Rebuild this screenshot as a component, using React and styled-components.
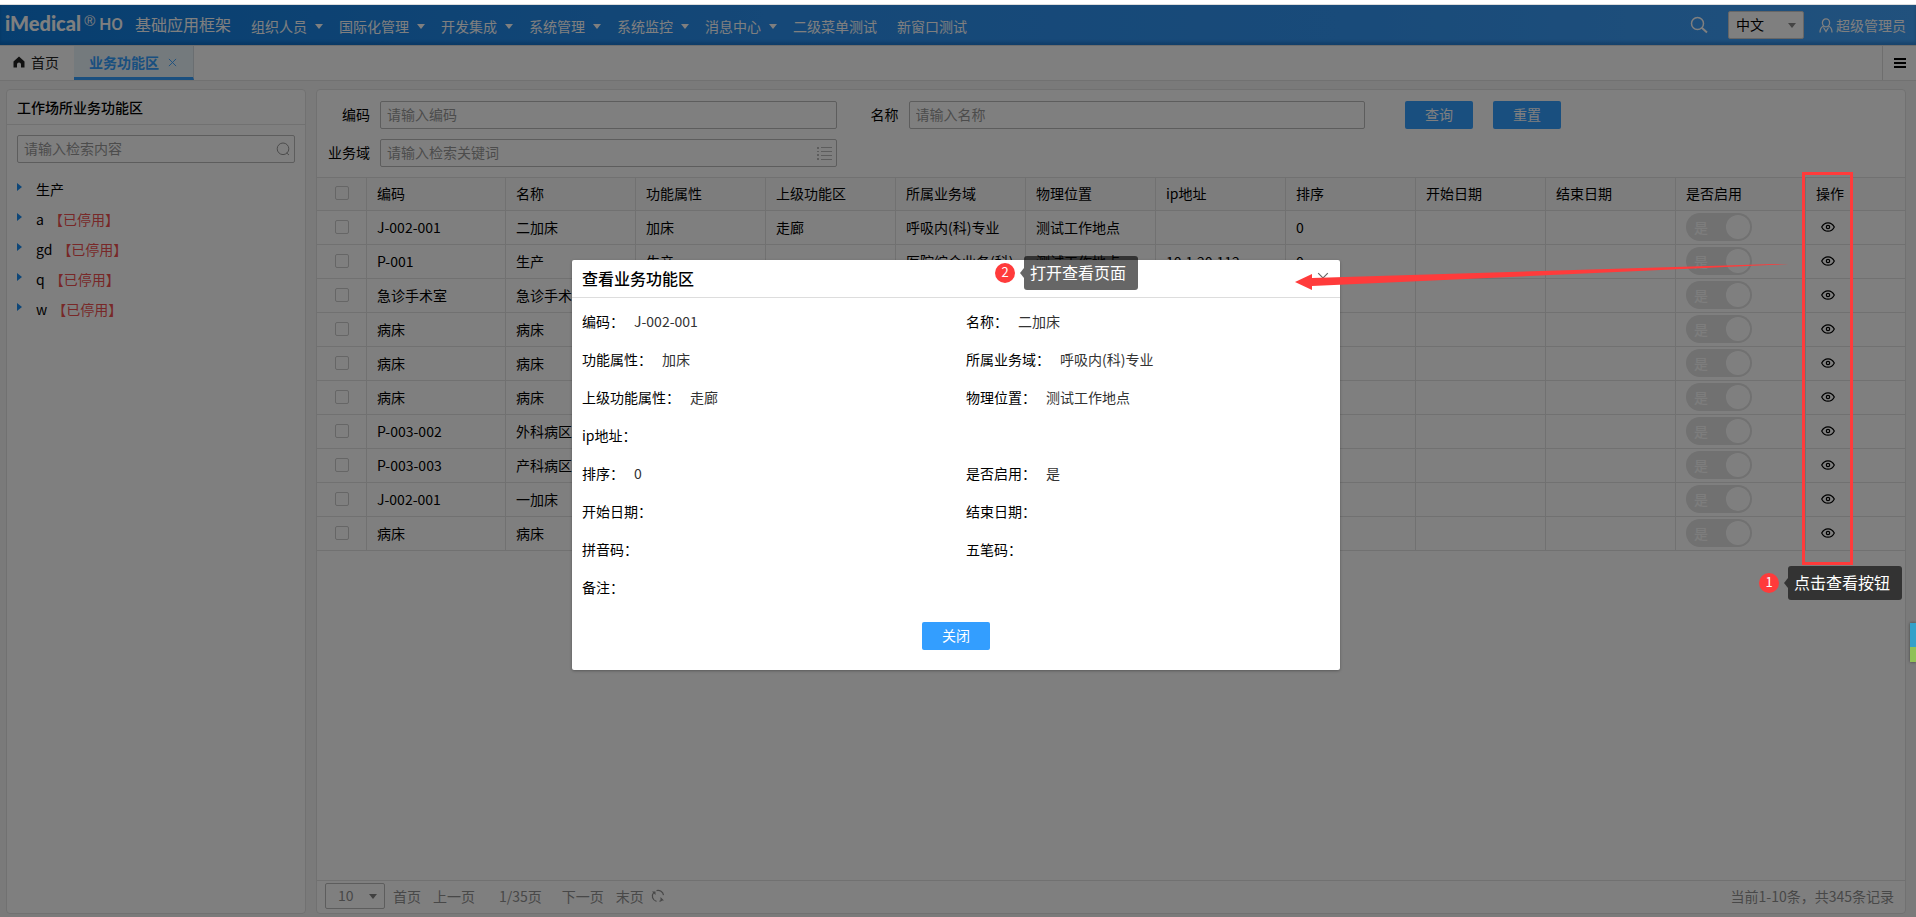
import React from "react";
import styled, { createGlobalStyle } from "styled-components";

const GlobalStyle = createGlobalStyle`
  *, *::before, *::after { box-sizing: border-box; }
  body {
    margin: 0;
    background: #fff;
    color: #000;
    font: 14px/20px "Noto Sans CJK SC", sans-serif;
  }
  button, input, select { font: inherit; color: inherit; }
  button { border: 0; padding: 0; background: none; cursor: pointer; }
  a { color: inherit; text-decoration: none; }
`;

const Page = styled.div`
  position: relative;
  display: flex;
  flex-direction: column;
  min-height: 100vh;
  border-top: 4px solid #fff;
`;

const Shell = styled.div`
  flex: 1;
  display: flex;
  flex-direction: column;
  border-top: 1px solid #ddd;
  background: #f5f5f5;
`;

/* ---------- header ---------- */

const Header = styled.header`
  display: flex;
  align-items: center;
  height: 40px;
  padding: 0 10px 0 5px;
  color: #fff;
  background: linear-gradient(90deg, #0f7ddf 0%, #2a90f0 40%, #3296f4 70%, #42a2fa 100%);
  box-shadow: inset 0 -3px 3px rgba(0, 60, 120, 0.25);
`;

const Logo = styled.span`
  font: 900 20px/32px Lato, sans-serif;
  height: 36px;
`;

const Registered = styled.span`
  height: 28px;
  margin: 0 4px 0 3px;
  font: 15px/20px "Liberation Sans", sans-serif;
`;

const Edition = styled.span`
  height: 32px;
  font: 500 17px/30px Roboto, sans-serif;
`;

const Product = styled.h1`
  margin: 0 20px 0 12px;
  padding-bottom: 2px;
  font-size: 16px;
  font-weight: 400;
  line-height: 20px;
`;

const Nav = styled.nav`
  display: flex;
  gap: 16px;
  padding-top: 2px;
`;

const NavItem = styled.button`
  display: flex;
  align-items: center;
  gap: 8px;
  padding-right: ${(p) => (p.$plain ? "4px" : "0")};
  white-space: nowrap;
`;

const Caret = styled.i`
  display: block;
  border: 4px solid transparent;
  border-top: 5px solid ${(p) => p.$color || "#fff"};
  border-bottom: 0;
  pointer-events: none;
`;

const HeaderTools = styled.div`
  display: flex;
  align-items: center;
  margin-left: auto;
`;

const IconButton = styled.button`
  display: flex;
  align-items: center;
  justify-content: center;
`;

const SelectBox = styled.div`
  display: flex;
  align-items: center;
  justify-content: flex-end;
  position: relative;
  margin: ${(p) => p.$margin || "0"};
  width: ${(p) => p.$width};
  height: ${(p) => p.$height};
  border: 1px solid ${(p) => p.$border};
  border-radius: 2px;
  background: #fff;
  padding-right: 7px;
`;

const Select = styled.select`
  position: absolute;
  inset: 0;
  width: 100%;
  padding: 0 0 2px ${(p) => p.$indent};
  border: 0;
  background: none;
  color: ${(p) => p.$color || "#000"};
  appearance: none;
`;

const User = styled.button`
  display: flex;
  align-items: center;
  gap: 3px;
`;

/* ---------- tab bar ---------- */

const TabBar = styled.div`
  display: flex;
  align-items: stretch;
  height: 36px;
  background: #fff;
  border-top: 1px solid #ddd;
  border-bottom: 1px solid #e2e2e2;
`;

const HomeTab = styled.button`
  display: flex;
  align-items: center;
  gap: 6px;
  padding: 0 15px 2px 13px;
  color: #222;
`;

const ActiveTab = styled.div`
  display: flex;
  align-items: center;
  gap: 9px;
  padding: 1px 16px 0 15px;
  border-bottom: 3px solid #339eff;
  border-right: 1px solid #d5dde2;
  background: #e8f4fa;
  color: #339eff;
  font-weight: 700;
`;

const TabMenu = styled(IconButton)`
  width: 34px;
  margin-left: auto;
  border-left: 1px solid #ddd;
`;

/* ---------- panels ---------- */

const Body = styled.div`
  flex: 1;
  display: grid;
  grid-template-columns: 300px minmax(0, 1fr);
  gap: 10px;
  padding: 8px 10px 3px 6px;
`;

const Panel = styled.section`
  display: flex;
  flex-direction: column;
  border: 1px solid #e2e2e2;
  border-radius: 4px;
  background: #fff;
`;

const PanelTitle = styled.h2`
  margin: 0;
  padding: 7px 10px;
  border-bottom: 1px solid #e2e2e2;
  font-size: 14px;
  font-weight: 500;
  line-height: 20px;
`;

const Field = styled.div`
  display: flex;
  align-items: center;
  height: 28px;
  border: 1px solid #bbb;
  border-radius: 2px;
  padding-right: 4px;
  background: #fff;
`;

const TextInput = styled.input`
  flex: 1;
  min-width: 0;
  height: 26px;
  padding: 0 6px 2px;
  border: 0;
  outline: 0;
  background: none;
  &::placeholder { color: #999; opacity: 1; }
`;

const TreeSearch = styled.div`
  padding: 10px;
`;

const Tree = styled.ul`
  margin: 2px 0 0;
  padding: 0 10px;
  list-style: none;
`;

const TreeItem = styled.li`
  display: flex;
  align-items: center;
  height: 30px;
  padding-bottom: 2px;
`;

const TreeArrow = styled.i`
  width: 19px;
  height: 12px;
  &::before {
    content: "";
    display: block;
    width: 0;
    border: 4px solid transparent;
    border-left: 5px solid #1a8cf0;
    border-right: 0;
  }
`;

const Disabled = styled.span`
  margin-left: 5px;
  color: #f05050;
`;

const Filters = styled.form`
  display: grid;
  grid-template-columns: 63px 1fr 72px 1fr 540px;
  row-gap: 10px;
  padding: 11px 0 10px;
`;

const FieldLabel = styled.label`
  padding-right: 10px;
  text-align: right;
  line-height: 26px;
`;

const Actions = styled.div`
  display: flex;
  gap: 20px;
  padding-left: 40px;
`;

const Primary = styled.button`
  width: 68px;
  height: 28px;
  padding-bottom: 2px;
  border-radius: 2px;
  background: #339eff;
  color: #fff;
`;

/* ---------- table ---------- */

const Table = styled.table`
  width: 100%;
  table-layout: fixed;
  border-collapse: separate;
  border-spacing: 0;
  border-top: 1px solid #e2e2e2;
`;

const Cell = styled.td`
  height: 34px;
  padding: 0 10px 2px;
  border-bottom: 1px solid #e2e2e2;
  border-right: 1px solid #e2e2e2;
  text-align: left;
  font-weight: 400;
  white-space: nowrap;
  overflow: hidden;
  text-overflow: ellipsis;
  &:last-child { border-right: 0; }
`;

const HeadCell = styled(Cell)`
  height: 33px;
  background: #fafafa;
`;

const Check = styled.input`
  display: block;
  appearance: none;
  width: 14px;
  height: 14px;
  margin: 0 0 0 8px;
  border: 1px solid #ccc;
  border-radius: 2px;
`;

const Toggle = styled.label`
  display: flex;
  align-items: center;
  justify-content: space-between;
  width: 66px;
  height: 28px;
  padding: 0 2px 0 8px;
  border-radius: 14px;
  background: #e2e2e2;
  color: #fafafa;
  font-weight: 500;
`;

const ToggleKnob = styled.input`
  appearance: none;
  width: 24px;
  height: 24px;
  margin: 0;
  border-radius: 50%;
  background: #fff;
`;

const EyeButton = styled(IconButton)`
  margin-left: 5px;
`;

/* ---------- pager ---------- */

const Pager = styled.footer`
  display: flex;
  align-items: center;
  height: 33px;
  margin-top: auto;
  padding: 0 11px 2px 8px;
  border-top: 1px solid #e2e2e2;
  color: #909090;
`;

const PageLink = styled.a`
  margin-left: ${(p) => p.$gap};
`;

const Summary = styled.span`
  margin-left: auto;
`;

/* ---------- dialog ---------- */

const Overlay = styled.div`
  position: absolute;
  inset: 1px 0 0;
  display: flex;
  align-items: flex-start;
  justify-content: center;
  padding: 255px 4px 0 0;
  background: rgba(0, 0, 0, 0.5);
`;

const Dialog = styled.div`
  width: 768px;
  max-width: 92%;
  border-radius: 2px;
  background: #fff;
  box-shadow: 0 1px 3px rgba(0, 0, 0, 0.3);
`;

const DialogHead = styled.div`
  display: flex;
  align-items: center;
  justify-content: space-between;
  height: 38px;
  padding: 0 10px 2px;
  border-bottom: 1px solid #ddd;
`;

const DialogTitle = styled.h2`
  margin: 0;
  font-size: 16px;
  font-weight: 500;
  line-height: 24px;
`;

const CloseIcon = styled(IconButton)`
  width: 14px;
  height: 14px;
`;

const Details = styled.dl`
  display: grid;
  grid-template-columns: 1fr 1fr;
  margin: 0;
  padding: 5px 0 0;
`;

const Detail = styled.div`
  display: flex;
  gap: 10px;
  height: 38px;
  padding-left: 10px;
  line-height: 36px;
  grid-column: ${(p) => (p.$wide ? "1 / -1" : "auto")};
`;

const Term = styled.dt``;

const Value = styled.dd`
  margin: 0;
  color: #333;
`;

const DialogFoot = styled.div`
  display: flex;
  justify-content: center;
  padding: 15px 0 20px;
`;

/* ---------- annotations ---------- */

const Callout = styled.div`
  position: absolute;
  top: ${(p) => p.$top};
  right: ${(p) => p.$right};
  display: flex;
  align-items: center;
`;

const Badge = styled.span`
  width: 20px;
  height: 20px;
  border-radius: 50%;
  background: #ff3b3b;
  color: #fff;
  font-size: 13px;
  line-height: 18px;
  text-align: center;
`;

const Pointer = styled.i`
  margin-left: 5px;
  border: 5px solid transparent;
  border-left: 0;
  border-right: 4px solid rgba(0, 0, 0, 0.6);
`;

const Tip = styled.span`
  width: 114px;
  padding: 4px 6px 6px;
  border-radius: 3px;
  background: rgba(0, 0, 0, 0.6);
  color: #fff;
  font-size: 16px;
  line-height: 24px;
  white-space: nowrap;
`;

const Highlight = styled.div`
  position: absolute;
  top: 168px;
  right: 63px;
  width: 51px;
  height: 393px;
  border: 3px solid #ff3b3b;
  pointer-events: none;
`;

const Arrow = styled.svg`
  position: absolute;
  top: 256px;
  right: 127px;
  pointer-events: none;
`;

const SideWidget = styled.div`
  position: absolute;
  top: 619px;
  right: 0;
  width: 6px;
  height: 39px;
  background: linear-gradient(#33a1c9 24px, #8fc156 24px);
  box-shadow: 0 0 3px rgba(0, 0, 0, 0.5);
`;

/* ---------- data ---------- */

const menus = [
  ["组织人员", true],
  ["国际化管理", true],
  ["开发集成", true],
  ["系统管理", true],
  ["系统监控", true],
  ["消息中心", true],
  ["二级菜单测试", false],
  ["新窗口测试", false],
];

const tree = [["生产", false], ["a", true], ["gd", true], ["q", true], ["w", true]];

const columns = [
  "编码", "名称", "功能属性", "上级功能区", "所属业务域", "物理位置",
  "ip地址", "排序", "开始日期", "结束日期", "是否启用", "操作",
];

const rows = [
  ["J-002-001", "二加床", "加床", "走廊", "呼吸内(科)专业", "测试工作地点", "", "0", "", ""],
  ["P-001", "生产", "生产", "", "医院综合业务(科)", "测试工作地点", "10.1.20.112", "0", "", ""],
  ["急诊手术室", "急诊手术室", "", "", "", "", "", "", "", ""],
  ["病床", "病床", "", "", "", "", "", "", "", ""],
  ["病床", "病床", "", "", "", "", "", "", "", ""],
  ["病床", "病床", "", "", "", "", "", "", "", ""],
  ["P-003-002", "外科病区", "", "", "", "", "", "", "", ""],
  ["P-003-003", "产科病区", "", "", "", "", "", "", "", ""],
  ["J-002-001", "一加床", "", "", "", "", "", "", "", ""],
  ["病床", "病床", "", "", "", "", "", "", "", ""],
];

const details = [
  ["编码", "J-002-001"], ["名称", "二加床"],
  ["功能属性", "加床"], ["所属业务域", "呼吸内(科)专业"],
  ["上级功能属性", "走廊"], ["物理位置", "测试工作地点"],
  ["ip地址", "", true],
  ["排序", "0"], ["是否启用", "是"],
  ["开始日期", ""], ["结束日期", ""],
  ["拼音码", ""], ["五笔码", ""],
  ["备注", "", true],
];

/* ---------- icons ---------- */

const SearchIcon = () => (
  <svg width="18" height="18" viewBox="0 0 18 18" fill="none" stroke="#fff" strokeWidth="1.5">
    <circle cx="7.5" cy="7.5" r="6" />
    <path d="M11.8 11.8 17 16.5" strokeWidth="2" />
  </svg>
);

const UserIcon = () => (
  <svg width="14" height="15" viewBox="0 0 14 15" fill="none" stroke="#fff" strokeWidth="1.3">
    <ellipse cx="7" cy="4.8" rx="3.6" ry="4" />
    <path d="M4.8 8C2.2 9 1 11 1 14.5M9.2 8C11.8 9 13 11 13 14.5M4.5 9.5 7 13.5 9.5 9.5" />
  </svg>
);

const HomeIcon = () => (
  <svg width="12" height="12" viewBox="0 0 12 12" fill="#222">
    <path d="M6 0.5 11.5 5.5V11.5H8V8.5a2 2 0 0 0-4 0v3H0.5V5.5Z" />
  </svg>
);

const Cross = ({ color, size }) => (
  <svg width={size} height={size} viewBox="0 0 10 10" fill="none" stroke={color}>
    <path d="M1 1 9 9M9 1 1 9" />
  </svg>
);

const MenuIcon = () => (
  <svg width="12" height="10" viewBox="0 0 12 10" fill="#000">
    <path d="M0 0h12v2H0zM0 4h12v2H0zM0 8h12v2H0z" />
  </svg>
);

const TreeSearchIcon = () => (
  <svg width="14" height="14" viewBox="0 0 14 14" fill="none" stroke="#999">
    <circle cx="7" cy="6.8" r="5.8" />
    <path d="M10.5 10.8 13 13" />
  </svg>
);

const ListIcon = () => (
  <svg width="15" height="13" viewBox="0 0 15 13" fill="#bbb">
    <path d="M0 0h2v2H0zM0 4h2v1H0zM0 7h2v2H0zM0 11h2v2H0zM4 0h11v1H4zM4 4h11v1H4zM4 8h11v1H4zM4 12h11v1H4z" />
  </svg>
);

const EyeIcon = () => (
  <svg width="14" height="10" viewBox="0 0 14 10" fill="none" stroke="#000" strokeWidth="1.2">
    <path d="M0.7 5C3.5-0.6 10.5-0.6 13.3 5 10.5 10.6 3.5 10.6 0.7 5Z" />
    <circle cx="7" cy="5" r="1.7" />
  </svg>
);

const RefreshIcon = () => (
  <svg width="14" height="14" viewBox="0 0 14 14" fill="none" stroke="#909090" strokeWidth="1.2">
    <path d="M5.5 12.4A5.6 5.6 0 0 1 2.8 3.3M5.5 1.6A5.6 5.6 0 0 1 12.5 6.2M8.5 12.4A5.6 5.6 0 0 0 11.2 10.7M1.4 7.8A5.6 5.6 0 0 0 2 9.5" />
    <path d="M1 2.5h3.5V6ZM13 11.5H9.500V8Z" fill="#909090" stroke="none" />
  </svg>
);

export default function App() {
  return (
    <Page>
      <GlobalStyle />
      <Shell>
        <Header>
          <Logo>iMedical</Logo>
          <Registered>®</Registered>
          <Edition>HO</Edition>
          <Product>基础应用框架</Product>
          <Nav>
            {menus.map(([name, hasMenu]) => (
              <NavItem key={name} $plain={!hasMenu}>
                {name}
                {hasMenu && <Caret />}
              </NavItem>
            ))}
          </Nav>
          <HeaderTools>
            <IconButton aria-label="搜索"><SearchIcon /></IconButton>
            <SelectBox $width="76px" $height="28px" $border="#ccc" $margin="0 15px 0 20px">
              <Select $indent="7px" aria-label="语言" defaultValue="中文">
                <option>中文</option>
              </Select>
              <Caret $color="#888" />
            </SelectBox>
            <User><UserIcon />超级管理员</User>
          </HeaderTools>
        </Header>

        <TabBar>
          <HomeTab><HomeIcon />首页</HomeTab>
          <ActiveTab>
            业务功能区
            <IconButton aria-label="关闭标签"><Cross color="#339eff" size={9} /></IconButton>
          </ActiveTab>
          <TabMenu aria-label="标签菜单"><MenuIcon /></TabMenu>
        </TabBar>

        <Body>
          <Panel>
            <PanelTitle>工作场所业务功能区</PanelTitle>
            <TreeSearch>
              <Field>
                <TextInput aria-label="检索" placeholder="请输入检索内容" />
                <IconButton aria-label="检索内容"><TreeSearchIcon /></IconButton>
              </Field>
            </TreeSearch>
            <Tree>
              {tree.map(([name, off]) => (
                <TreeItem key={name}>
                  <TreeArrow />
                  {name}
                  {off && <Disabled>【已停用】</Disabled>}
                </TreeItem>
              ))}
            </Tree>
          </Panel>

          <Panel>
            <Filters onSubmit={(e) => e.preventDefault()}>
              <FieldLabel htmlFor="code">编码</FieldLabel>
              <Field><TextInput id="code" placeholder="请输入编码" /></Field>
              <FieldLabel htmlFor="name">名称</FieldLabel>
              <Field><TextInput id="name" placeholder="请输入名称" /></Field>
              <Actions>
                <Primary type="submit">查询</Primary>
                <Primary type="reset">重置</Primary>
              </Actions>
              <FieldLabel htmlFor="domain">业务域</FieldLabel>
              <Field>
                <TextInput id="domain" placeholder="请输入检索关键词" />
                <IconButton type="button" aria-label="选择业务域"><ListIcon /></IconButton>
              </Field>
            </Filters>

            <Table>
              <colgroup>
                <col width="50" />
                <col width="139" />
                {columns.slice(1, 11).map((c) => <col key={c} width="130" />)}
                <col />
              </colgroup>
              <thead>
                <tr>
                  <HeadCell as="th"><Check type="checkbox" aria-label="全选" /></HeadCell>
                  {columns.map((c) => <HeadCell as="th" key={c}>{c}</HeadCell>)}
                </tr>
              </thead>
              <tbody>
                {rows.map((row, i) => (
                  <tr key={i}>
                    <Cell><Check type="checkbox" aria-label={`选择第${i + 1}行`} /></Cell>
                    {row.map((text, j) => <Cell key={j}>{text}</Cell>)}
                    <Cell>
                      <Toggle>是<ToggleKnob type="checkbox" defaultChecked disabled /></Toggle>
                    </Cell>
                    <Cell><EyeButton aria-label="查看"><EyeIcon /></EyeButton></Cell>
                  </tr>
                ))}
              </tbody>
            </Table>

            <Pager>
              <SelectBox $width="60px" $height="26px" $border="#bbb">
                <Select $indent="12px" $color="#909090" aria-label="每页条数" defaultValue="10">
                  <option>10</option>
                </Select>
                <Caret $color="#808080" />
              </SelectBox>
              <PageLink href="#first" $gap="8px">首页</PageLink>
              <PageLink href="#prev" $gap="12px">上一页</PageLink>
              <PageLink as="span" $gap="24px">1/35页</PageLink>
              <PageLink href="#next" $gap="20px">下一页</PageLink>
              <PageLink href="#last" $gap="12px">末页</PageLink>
              <PageLink as={IconButton} $gap="7px" aria-label="刷新"><RefreshIcon /></PageLink>
              <Summary>当前1-10条，共345条记录</Summary>
            </Pager>
          </Panel>
        </Body>
      </Shell>

      <Overlay>
        <Dialog role="dialog" aria-labelledby="dialog-title">
          <DialogHead>
            <DialogTitle id="dialog-title">查看业务功能区</DialogTitle>
            <CloseIcon aria-label="关闭"><Cross color="#666" size={12} /></CloseIcon>
          </DialogHead>
          <Details>
            {details.map(([term, value, wide]) => (
              <Detail key={term} $wide={wide}>
                <Term>{term}：</Term>
                <Value>{value}</Value>
              </Detail>
            ))}
          </Details>
          <DialogFoot><Primary>关闭</Primary></DialogFoot>
        </Dialog>
      </Overlay>

      <Highlight />
      <Arrow width="494" height="32" viewBox="0 0 494 32" fill="#ff3b3b">
        <path d="M0 22 17 14V18L480 4 494 4 17 26V30Z" />
      </Arrow>
      <Callout $top="252px" $right="778px">
        <Badge>2</Badge><Pointer /><Tip>打开查看页面</Tip>
      </Callout>
      <Callout $top="562px" $right="14px">
        <Badge>1</Badge><Pointer /><Tip>点击查看按钮</Tip>
      </Callout>
      <SideWidget />
    </Page>
  );
}
